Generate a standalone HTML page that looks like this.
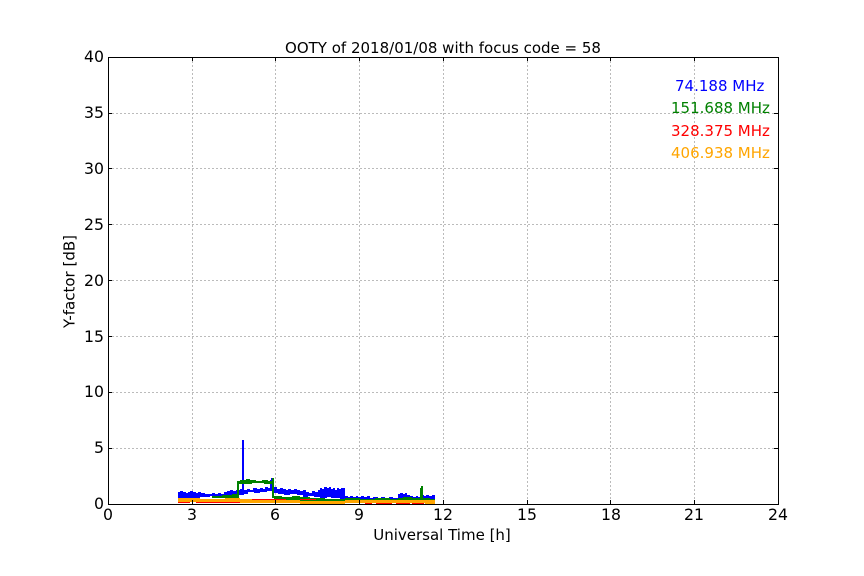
<!DOCTYPE html>
<html><head><meta charset="utf-8"><style>
html,body{margin:0;padding:0;background:#fff}
svg{display:block}
text{font-family:"DejaVu Sans",sans-serif;fill:#000}
.t{font-size:15.7px}
.l{font-size:15px}
</style></head><body>
<svg width="864" height="576" viewBox="0 0 864 576" xmlns="http://www.w3.org/2000/svg">
<rect width="864" height="576" fill="#fff"/>
<g stroke="#bbbbbb" stroke-width="1" stroke-dasharray="2 2" fill="none" shape-rendering="crispEdges">
<path d="M192.5 57V504M275.5 57V504M359.5 57V504M443.5 57V504M527.5 57V504M610.5 57V504M694.5 57V504"/>
<path d="M108 113.5H778M108 168.5H778M108 224.5H778M108 280.5H778M108 336.5H778M108 392.5H778M108 448.5H778"/>
</g>
<g shape-rendering="crispEdges">
<!-- blue -->
<path fill="#0000ff" d="M178 493V492H180V491H183V492H186V493H188V492H190V491H193V492H196V493H198V492H201V493H205V494H212V493H215V494H218V493H221V494H224V492H227V491H230V490H233V491H236V490H240V489H244V490H247V489H250V490H253V488H257V489H260V488H263V489H265V487H268V488H270V480H271V478H274V487H277V489H280V488H283V489H286V490H288V489H291V490H294V489H297V490H300V491H303V490H306V492H309V493H312V491H315V492H318V490H320V488H322V489H324V487H327V488H329V487H331V489H333V488H335V490H337V488H339V489H341V488H345V496H348V497H350V496H353V497H356V496H358V497H361V496H364V497H367V496H370V498H373V497H378V498H381V497H385V498H389V497H393V498H398V494H400V493H403V494H405V493H407V495H410V496H413V497H416V496H418V497H421V495H424V496H426V495H429V496H432V495H435V501H345V499H340V498H331V497H327V498H320V497H314V496H308V497H303V495H297V494H290V495H284V494H278V493H272V491H267V492H260V493H254V492H248V494H244V495H237V496H230V495H226V497H215V496H210V497H200V498H178Z"/>
<path fill="#0000ff" d="M242 440h2V492h-2Z"/>
<!-- green -->
<path fill="#008000" d="M212 498V496H222V495H232V494H237V498Z"/>
<path fill="#008000" d="M237 498V481H240V480H246V479H250V480H256V481H262V480H268V481H272V478H274V496H282V497H292V496H300V497H310V498H325V499H345V498H360V499H375V498H390V499H398V498H403V497H412V498H420V497V488H421V486H423V498H430V499H435V501H274V498H272V484H264V483H252V484H239V498Z"/>
<!-- red -->
<path fill="#ff0000" d="M178 502H190V503H178ZM196 502H240V503H196ZM252 499H286V500H252ZM300 499H316V500H300ZM365 503H372V504H365ZM376 503H392V504H376ZM396 503H410V504H396ZM412 503H424V504H412Z"/>
<!-- orange -->
<path fill="#ffa500" d="M178 498H200V499H225V498H240V499H252V500H300V501H345V500H435V504H425V503H345V504H300V503H240V502H178Z"/>
</g>
<!-- axes frame -->
<rect x="108.5" y="57.5" width="670" height="447" fill="none" stroke="#000" stroke-width="1" shape-rendering="crispEdges"/>
<g stroke="#000" stroke-width="1" shape-rendering="crispEdges">
<path d="M192.5 504v-4M275.5 504v-4M359.5 504v-4M443.5 504v-4M527.5 504v-4M610.5 504v-4M694.5 504v-4"/>
<path d="M192.5 57v4M275.5 57v4M359.5 57v4M443.5 57v4M527.5 57v4M610.5 57v4M694.5 57v4"/>
<path d="M108 113.5h4M108 168.5h4M108 224.5h4M108 280.5h4M108 336.5h4M108 392.5h4M108 448.5h4"/>
<path d="M778 113.5h-4M778 168.5h-4M778 224.5h-4M778 280.5h-4M778 336.5h-4M778 392.5h-4M778 448.5h-4"/>
</g>
<g class="t" text-anchor="end">
<text x="104" y="62">40</text><text x="104" y="118">35</text><text x="104" y="174">30</text><text x="104" y="230">25</text><text x="104" y="286">20</text><text x="104" y="342">15</text><text x="104" y="397">10</text><text x="104" y="453">5</text><text x="104" y="509">0</text>
</g>
<g class="t" text-anchor="middle">
<text x="108" y="520">0</text><text x="192" y="520">3</text><text x="275" y="520">6</text><text x="359" y="520">9</text><text x="443" y="520">12</text><text x="527" y="520">15</text><text x="611" y="520">18</text><text x="694" y="520">21</text><text x="778" y="520">24</text>
</g>
<text class="l" x="442" y="540" text-anchor="middle">Universal Time [h]</text>
<text class="l" transform="translate(74.500,281.500) rotate(-90)" text-anchor="middle">Y-factor [dB]</text>
<text class="l" x="443" y="53" text-anchor="middle">OOTY of 2018/01/08 with focus code = 58</text>
<g class="l">
<text x="675" y="91" style="fill:#0000ff">74.188 MHz</text>
<text x="671" y="113" style="fill:#008000">151.688 MHz</text>
<text x="671" y="136" style="fill:#ff0000">328.375 MHz</text>
<text x="671" y="158" style="fill:#ffa500">406.938 MHz</text>
</g>
</svg>
</body></html>
